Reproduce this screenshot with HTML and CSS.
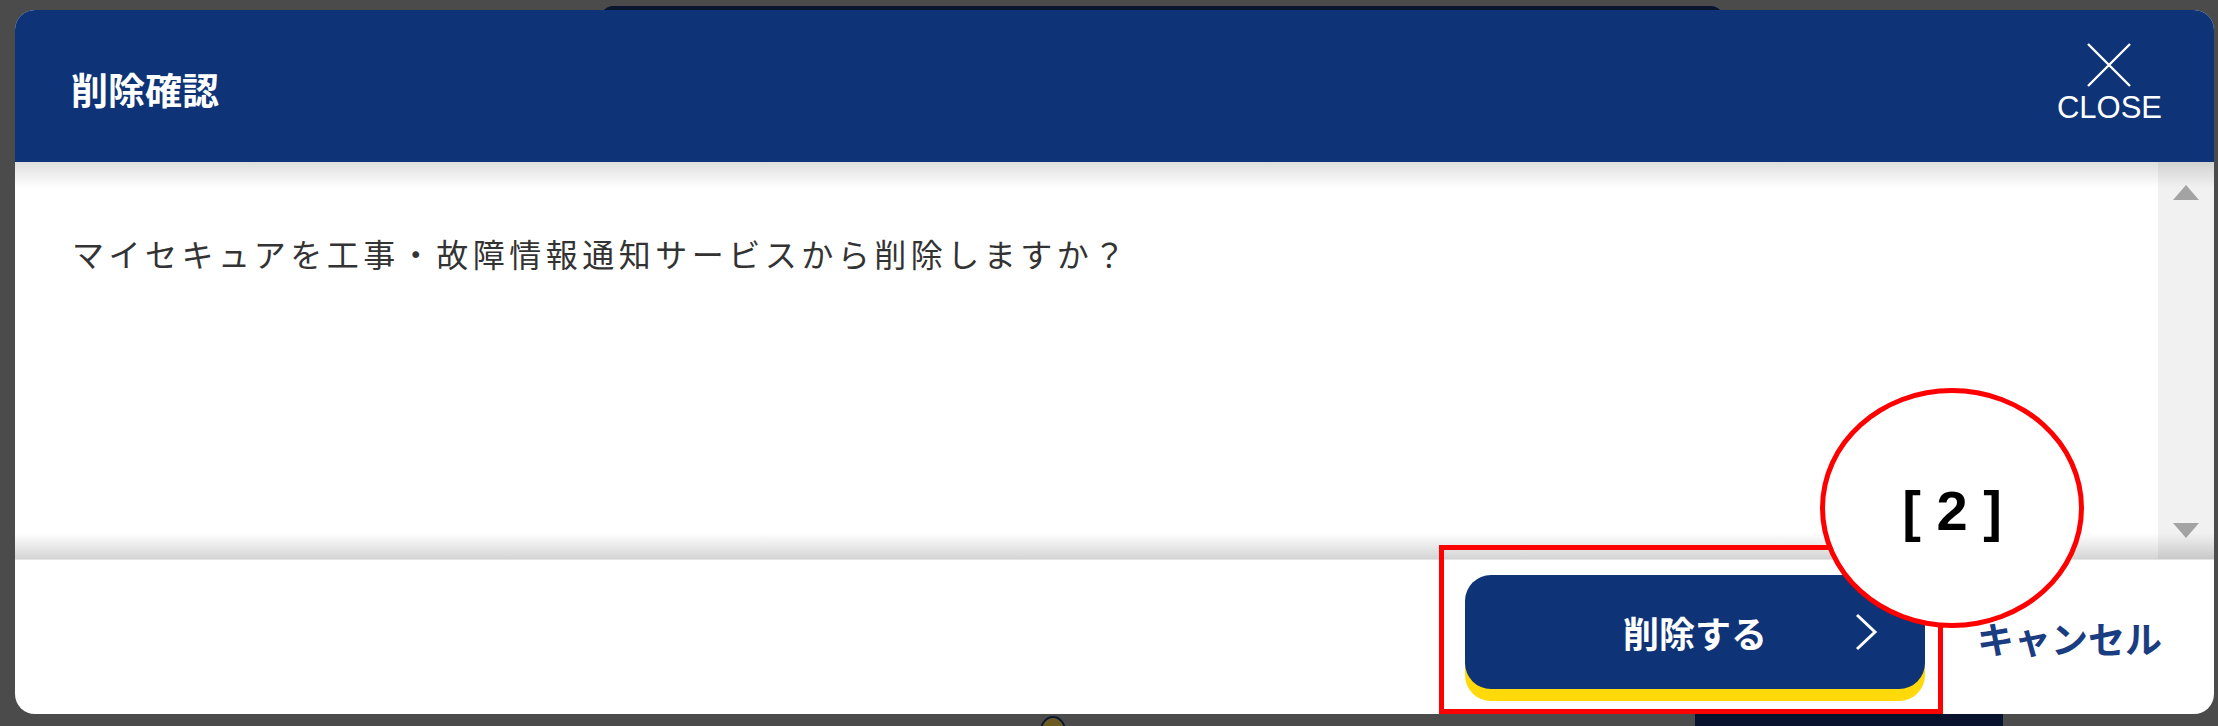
FILE: index.html
```html
<!DOCTYPE html>
<html lang="ja">
<head>
  <meta charset="UTF-8" />
  <meta name="viewport" content="width=device-width, initial-scale=1.0" />
  <title>削除確認</title>
  <link rel="stylesheet" href="styles.css">
</head>
<body>
  <!-- 背景のページ（モーダルの下） -->
  <div class="page-bar"></div>
  <div class="page-dot"></div>
  <div class="page-btn"></div>

  <div class="modal">
    <header class="modal-head">
      <h1>削除確認</h1>
      <button class="close-btn" type="button">
        <svg width="46" height="44" viewBox="0 0 46 44">
          <path d="M2 1 L44 43 M44 1 L2 43" stroke="#ffffff" stroke-width="2.4" fill="none" />
        </svg>
        <span>CLOSE</span>
      </button>
    </header>

    <div class="modal-body">
      <div class="modal-content">
        <p>マイセキュアを工事・故障情報通知サービスから削除しますか？</p>
      </div>
      <div class="scrollbar">
        <span class="arrow arrow-up"></span>
        <span class="arrow arrow-down"></span>
      </div>
    </div>

    <footer class="modal-foot">
      <button class="btn-delete" type="button">
        <span></span>
        <span class="btn-label">削除する</span>
        <svg class="chevron" width="24" height="38" viewBox="0 0 24 38">
          <path d="M3 2 L21 19 L3 36" stroke="#ffffff" stroke-width="3" fill="none" />
        </svg>
      </button>
      <a class="cancel" href="#">キャンセル</a>
    </footer>
  </div>

  <!-- 注釈 -->
  <div class="mark-rect"></div>
  <div class="mark-circle">[ 2 ]</div>
</body>
</html>
```

FILE: styles.css
```css
:root {
  --navy: #0e3477;
  --yellow: #ffd90a;
  --red: #ff0000;
}

body {
  margin: 0;
  width: 2218px;
  height: 726px;
  overflow: hidden;
  position: relative;
  background: #4b4b4b;
  font-family: "Noto Sans CJK JP", "Liberation Sans", sans-serif;
}

/* 背景ページの断片 */
.page-bar {
  position: absolute;
  left: 601px;
  top: 6px;
  width: 1122px;
  height: 20px;
  background: #09142f;
  border-radius: 12px 12px 0 0;
}

.page-btn {
  position: absolute;
  left: 1695px;
  top: 712px;
  width: 308px;
  height: 30px;
  background: #08122c;
}

.page-dot {
  position: absolute;
  left: 1040px;
  top: 716px;
  width: 22px;
  height: 26px;
  border: 2px solid #0b1632;
  border-radius: 50%;
  background: #6a5a22;
}

/* モーダル */
.modal {
  position: relative;
  margin: 10px 4px 0 15px;
  height: 704px;
  display: flex;
  flex-direction: column;
  background: #ffffff;
  border-radius: 20px;
  overflow: hidden;
}

.modal-head {
  height: 152px;
  flex-shrink: 0;
  display: flex;
  align-items: center;
  justify-content: space-between;
  padding: 0 52px 0 56px;
  background: var(--navy);
  color: #ffffff;
}

.modal-head h1 {
  margin: 6px 0 0;
  font-size: 37px;
  font-weight: 700;
  line-height: 1.2;
}

.close-btn {
  display: flex;
  flex-direction: column;
  align-items: center;
  gap: 6px;
  margin-bottom: 6px;
  padding: 0;
  border: none;
  background: none;
  color: #ffffff;
  font-family: "Liberation Sans", Arial, sans-serif;
  font-size: 31px;
  line-height: 30px;
  cursor: pointer;
}

.close-btn svg {
  display: block;
}

/* 本文 */
.modal-body {
  position: relative;
  flex: 1;
  display: flex;
}

.modal-body::before,
.modal-body::after {
  content: "";
  position: absolute;
  left: 0;
  right: 0;
  height: 26px;
  pointer-events: none;
}

.modal-body::before {
  top: 0;
  background: linear-gradient(to bottom, rgba(0, 0, 0, 0.13), rgba(0, 0, 0, 0));
}

.modal-body::after {
  bottom: 0;
  background: linear-gradient(to bottom, rgba(0, 0, 0, 0), rgba(0, 0, 0, 0.17));
  border-bottom: 1px solid #e4e4e4;
}

.modal-content {
  flex: 1;
  padding: 67px 56px 0 57px;
}

.modal-content p {
  margin: 0;
  font-size: 32px;
  line-height: 1.5;
  letter-spacing: 4.5px;
  color: #333333;
}

.scrollbar {
  width: 56px;
  flex-shrink: 0;
  display: flex;
  flex-direction: column;
  justify-content: space-between;
  align-items: center;
  padding: 23px 0 22px;
  box-sizing: border-box;
  background: #f1f1f1;
}

.arrow {
  width: 0;
  height: 0;
  border-left: 13px solid transparent;
  border-right: 13px solid transparent;
}

.arrow-up {
  border-bottom: 15px solid #a3a3a3;
}

.arrow-down {
  border-top: 15px solid #a3a3a3;
}

/* フッター */
.modal-foot {
  height: 154px;
  flex-shrink: 0;
  box-sizing: border-box;
  display: flex;
  justify-content: flex-end;
  align-items: flex-start;
  gap: 52px;
  padding: 15px 52px 0 0;
}

.btn-delete {
  width: 460px;
  height: 114px;
  display: grid;
  grid-template-columns: 1fr auto 1fr;
  align-items: center;
  padding: 0 47px 0 0;
  border: none;
  border-radius: 26px;
  background: var(--navy);
  box-shadow: 0 12px 0 var(--yellow);
  color: #ffffff;
  font-family: inherit;
  font-size: 36px;
  font-weight: 700;
  cursor: pointer;
}

.btn-label {
  padding-left: 47px;
  line-height: 1.3;
}

.chevron {
  justify-self: end;
  display: block;
}

.cancel {
  margin-top: 36px;
  font-size: 37px;
  font-weight: 700;
  line-height: 1.5;
  color: #1a3d82;
  text-decoration: none;
}

/* 注釈マーク */
.mark-rect {
  position: absolute;
  left: 1439px;
  top: 545px;
  width: 504px;
  height: 169px;
  box-sizing: border-box;
  border: 5px solid var(--red);
}

.mark-circle {
  position: absolute;
  left: 1820px;
  top: 388px;
  width: 264px;
  height: 240px;
  box-sizing: border-box;
  border: 5px solid var(--red);
  border-radius: 50%;
  background: #ffffff;
  display: flex;
  align-items: center;
  justify-content: center;
  font-family: "Liberation Sans", Arial, sans-serif;
  font-size: 56px;
  font-weight: 700;
  color: #000000;
  padding-top: 4px;
}
```
